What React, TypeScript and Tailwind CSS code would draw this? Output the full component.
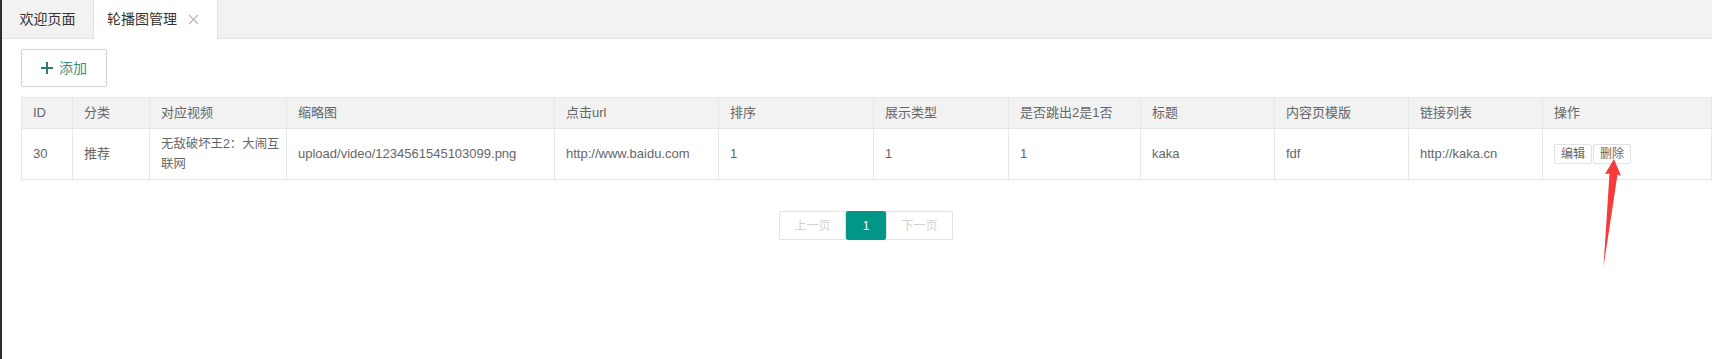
import React from "react";

const cols = [
  "w-[51px]",
  "w-[77px]",
  "w-[137px]",
  "w-[268px]",
  "w-[164px]",
  "w-[155px]",
  "w-[135px]",
  "w-[132px]",
  "w-[134px]",
  "w-[134px]",
  "w-[134px]",
  "w-[169px]",
];

const headers = [
  "ID",
  "分类",
  "对应视频",
  "缩略图",
  "点击url",
  "排序",
  "展示类型",
  "是否跳出2是1否",
  "标题",
  "内容页模版",
  "链接列表",
  "操作",
];

export default function App() {
  const th =
    "border border-[#e6e6e6] px-[11px] py-[5px] leading-[20px] text-left font-normal text-[13px] text-[#666] whitespace-nowrap overflow-hidden";
  const td =
    "border border-[#e6e6e6] px-[11px] py-[5px] leading-[20px] text-left text-[13px] text-[#666] whitespace-nowrap overflow-hidden";
  return (
    <div className="relative w-[1712px] h-[359px] bg-white flex overflow-hidden font-['Liberation_Sans','Noto_Sans_CJK_SC',sans-serif]">
      <div className="w-[2px] shrink-0 bg-[#2a2d36]" />
      <div className="flex-1 flex flex-col min-w-0">
        {/* tab bar */}
        <div className="h-[39px] shrink-0 bg-[#f2f2f2] border-b border-[#e2e2e2] flex items-start">
          <div className="w-[91px] h-[38px] flex items-center justify-center text-[14px] text-[#333]">
            欢迎页面
          </div>
          <div className="w-[125px] h-[39px] bg-white border-x border-[#e2e2e2] flex items-center pl-[13px] text-[14px] text-[#333]">
            <span className="leading-[38px] -mt-px">轮播图管理</span>
            <svg
              className="ml-[11px] -mt-px"
              width="11"
              height="11"
              viewBox="0 0 11 11"
            >
              <path
                d="M1 1 L10 10 M10 1 L1 10"
                stroke="#b8b8b8"
                strokeWidth="1.2"
                fill="none"
              />
            </svg>
          </div>
        </div>

        {/* content */}
        <div className="pl-[19px] pt-[10px] flex flex-col">
          <div>
            <button className="w-[86px] h-[38px] border border-[#d2d2d2] rounded-[2px] bg-white flex items-center justify-center">
              <svg width="12" height="12" viewBox="0 0 12 12" className="mr-[6px]">
                <path
                  d="M6 0 V12 M0 6 H12"
                  stroke="#2f7b72"
                  strokeWidth="2"
                  fill="none"
                />
              </svg>
              <span className="text-[14px] text-[#3f8c83] leading-none">添加</span>
            </button>
          </div>

          <table className="mt-[10px] w-[1690px] table-fixed border-collapse">
            <colgroup>
              {cols.map((c, i) => (
                <col key={i} className={c} />
              ))}
            </colgroup>
            <thead>
              <tr className="bg-[#f2f2f2]">
                {headers.map((h) => (
                  <th key={h} className={th}>
                    {h}
                  </th>
                ))}
              </tr>
            </thead>
            <tbody>
              <tr>
                <td className={td}>30</td>
                <td className={td}>推荐</td>
                <td className={td}>
                  <div className="text-[12.4px]">无敌破坏王2：大闹互</div>
                  <div className="text-[12.4px]">联网</div>
                </td>
                <td className={td}>upload/video/1234561545103099.png</td>
                <td className={td}>http://www.baidu.com</td>
                <td className={td}>1</td>
                <td className={td}>1</td>
                <td className={td}>1</td>
                <td className={td}>kaka</td>
                <td className={td}>fdf</td>
                <td className={td}>http://kaka.cn</td>
                <td className={td}>
                  <div className="flex gap-px">
                    <span className="w-[38px] h-[20px] border border-[#e2e2e2] rounded-[2px] flex items-center justify-center text-[12px] text-[#666] leading-none">
                      编辑
                    </span>
                    <span className="w-[38px] h-[20px] border border-[#e2e2e2] rounded-[2px] flex items-center justify-center text-[12px] text-[#666] leading-none">
                      删除
                    </span>
                  </div>
                </td>
              </tr>
            </tbody>
          </table>

          {/* pagination */}
          <div className="w-[1690px] flex justify-center mt-[31px]">
            <div className="flex h-[29px] text-[12px]">
              <span className="w-[67px] h-[29px] border border-[#e2e2e2] rounded-l-[2px] flex items-center justify-center text-[#d2d2d2]">
                上一页
              </span>
              <span className="w-[40px] h-[29px] bg-[#009688] rounded-[2px] flex items-center justify-center text-white">
                1
              </span>
              <span className="w-[67px] h-[29px] border border-[#e2e2e2] rounded-r-[2px] flex items-center justify-center text-[#d2d2d2]">
                下一页
              </span>
            </div>
          </div>
        </div>
      </div>

      {/* red arrow annotation */}
      <svg
        className="absolute left-0 top-0 pointer-events-none"
        width="1712"
        height="359"
        viewBox="0 0 1712 359"
      >
        <polygon
          points="1614,159 1621,176 1617.5,174.5 1603.5,267 1609.5,173.5 1605,174"
          fill="#f73a3a"
        />
      </svg>
    </div>
  );
}
